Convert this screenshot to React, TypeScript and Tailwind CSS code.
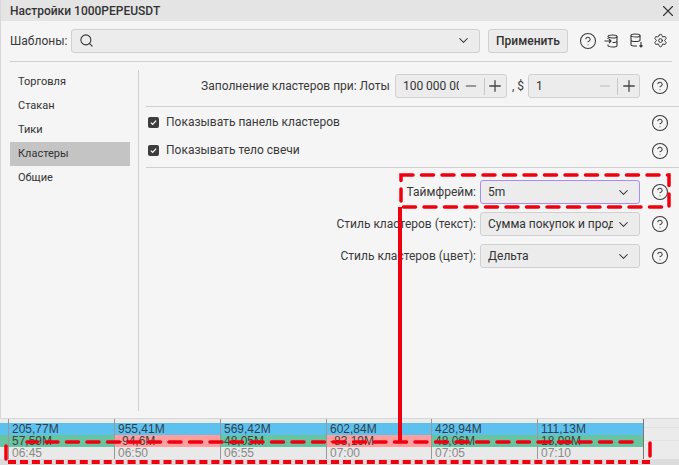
import React from 'react';
import { ChevronDown, CircleHelp, Minus, Plus, Search, Settings, X } from 'lucide-react';

const menuItems = ['Торговля', 'Стакан', 'Тики', 'Кластеры', 'Общие'];

const chartColumns = [
  { volume: '205,77M', delta: '57,59M', time: '06:45', width: 'w-[106px]', bg: 'bg-[#69c5a1]' },
  { volume: '955,41M', delta: '-94,6M', time: '06:50', width: 'w-[106px]', bg: 'bg-[#ff9e9e]' },
  { volume: '569,42M', delta: '48,05M', time: '06:55', width: 'w-[106px]', bg: 'bg-[#69c5a1]' },
  { volume: '602,84M', delta: '-83,19M', time: '07:00', width: 'w-[105px]', bg: 'bg-[#ff9e9e]' },
  { volume: '428,94M', delta: '48,06M', time: '07:05', width: 'w-[106px]', bg: 'bg-[#69c5a1]' },
  { volume: '111,13M', delta: '18,98M', time: '07:10', width: 'w-[106px]', bg: 'bg-[#69c5a1]' },
];

const Help = () => <CircleHelp className="w-[18px] h-[18px] text-[#3a3a3a] shrink-0" strokeWidth={1.4} />;

const DbImport = () => (
  <svg width="14" height="14" viewBox="0 0 14 14" fill="none" stroke="#333" strokeWidth="1.1" className="shrink-0">
    <ellipse cx="8.500" cy="2.500" rx="4.500" ry="1.500" />
    <path d="M13 2.500v9c0 .9-2 1.500-4.500 1.500S4 12.400 4 11.500v-1M13 7c0 .9-2 1.500-4.500 1.500M4 4v1" />
    <path d="M0.500 7h6.500M5 5l2 2-2 2" />
  </svg>
);

const DbExport = () => (
  <svg width="14" height="15" viewBox="0 0 14 15" fill="none" stroke="#333" strokeWidth="1.1" className="shrink-0">
    <ellipse cx="5.500" cy="2.500" rx="4.500" ry="1.500" />
    <path d="M1 2.500v9c0 .9 2 1.500 4.500 1.500H7M10 2.500v5M1 7c0 .9 2 1.500 4.500 1.500S10 7.900 10 7" />
    <path d="M11 9v5M9.500 12.500l1.500 1.500 1.500-1.500" />
  </svg>
);

const Stepper = ({ value, dim }: { value: string; dim?: boolean }) => (
  <div className="w-[112px] h-[24px] flex items-center bg-[#ececec] border border-[#d0d0d0] rounded-[3px] shrink-0">
    <span className="w-[56px] ml-[7px] overflow-hidden whitespace-nowrap text-[12px] text-[#333]">{value}</span>
    <span className="w-[25px] flex justify-center">
      <Minus className={`w-[16px] h-[16px] ${dim ? 'text-[#bbb]' : 'text-[#444]'}`} strokeWidth={1.8} />
    </span>
    <span className="w-px h-[17px] bg-[#c8c8c8]" />
    <span className="w-[21px] flex justify-center">
      <Plus className="w-[18px] h-[18px] text-[#444]" strokeWidth={1.7} />
    </span>
  </div>
);

const Check = ({ label }: { label: string }) => (
  <label className="flex items-center gap-[7px] text-[12px] text-[#3a3a3a]">
    <span className="w-[11px] h-[11px] rounded-[2px] bg-[#3d3d3d] flex items-center justify-center">
      <svg width="7" height="7" viewBox="0 0 8 8" fill="none" stroke="#fff" strokeWidth="1.4"><path d="M1 4.200l2 2 4-4.400" /></svg>
    </span>
    {label}
  </label>
);

const SelectRow = ({ label, value, focused }: { label: string; value: string; focused?: boolean }) => (
  <div className="h-[24px] flex items-center justify-end pr-[10px]">
    <span className="text-[12px] text-[#3a3a3a] mr-[4px]">{label}</span>
    <div className={`w-[160px] h-[24px] flex items-center bg-[#ececec] border rounded-[3px] pl-[7px] pr-[8px] ${focused ? 'border-[#a88cf0]' : 'border-[#d0d0d0]'}`}>
      <span className="w-[125px] overflow-hidden whitespace-nowrap text-[12px] text-[#333]">{value}</span>
      <ChevronDown className="ml-auto w-[15px] h-[15px] text-[#444]" strokeWidth={1.7} />
    </div>
    <span className="ml-[11px]"><Help /></span>
  </div>
);

const App: React.FC = () => {
  return (
    <div className="relative w-[679px] h-[465px] overflow-hidden bg-[#ebebeb] text-[#333] font-['Roboto',sans-serif] flex flex-col">
      {/* dialog */}
      <div className="h-[419px] shrink-0 flex flex-col bg-[#f5f5f5] border-l border-b border-[#d8d8d8]">
        {/* title */}
        <div className="h-[21px] shrink-0 bg-[#e4e4e4] flex items-center pl-[9px] pr-[2px]">
          <span className="text-[12px] font-medium text-[#333]">Настройки 1000PEPEUSDT</span>
          <X className="ml-auto w-[18px] h-[18px] text-[#333]" strokeWidth={1.5} />
        </div>

        {/* templates */}
        <div className="h-[41px] shrink-0 ml-[9px] mr-[7px] border-b border-[#cfcfcf] flex items-center pb-[1px]">
          <span className="text-[12px] text-[#3a3a3a] w-[61px]">Шаблоны:</span>
          <div className="w-[409px] h-[24px] flex items-center bg-[#ececec] border border-[#d0d0d0] rounded-[3px] pl-[7px] pr-[8px]">
            <Search className="w-[15px] h-[15px] text-[#333]" strokeWidth={1.7} />
            <ChevronDown className="ml-auto w-[15px] h-[15px] text-[#444]" strokeWidth={1.7} />
          </div>
          <button className="ml-[8px] w-[80px] h-[24px] bg-[#ececec] border border-[#d0d0d0] rounded-[3px] text-[12px] font-medium text-[#333]">Применить</button>
          <span className="ml-[11px] flex items-center">
            <Help />
            <span className="ml-[7px]"><DbImport /></span>
            <span className="ml-[12px]"><DbExport /></span>
            <Settings className="ml-[9px] w-[15px] h-[15px] text-[#333]" strokeWidth={1.6} />
          </span>
        </div>

        {/* settings */}
        <div className="flex-1 flex min-h-0 pl-[9px] pt-[8px] pb-[7px]">
          <div className="w-[120px] shrink-0">
            {menuItems.map((item) => (
              <div key={item} className={`h-[24px] flex items-center pl-[8px] pt-px text-[11px] ${item === 'Кластеры' ? 'bg-[#c4c4c4]' : ''}`}>{item}</div>
            ))}
          </div>
          <div className="ml-[8px] w-px bg-[#d0d0d0] shrink-0" />
          <div className="flex-1 pl-[7px]">
            <div className="h-[37px] border-b border-[#cfcfcf] flex items-center justify-end pr-[10px] pb-[8px] pt-[4px]">
              <span className="text-[12px] text-[#3a3a3a] mr-[5px]">Заполнение кластеров при: Лоты</span>
              <Stepper value="100 000 000" />
              <span className="text-[12px] ml-[5px] mr-[4px] text-[#3a3a3a]">, $</span>
              <Stepper value="1" dim />
              <span className="ml-[11px]"><Help /></span>
            </div>
            <div className="h-[61px] border-b border-[#cfcfcf] flex flex-col pr-[10px] pl-[2px] pt-px">
              <div className="h-[28px] flex items-center justify-between"><Check label="Показывать панель кластеров" /><span className="mt-px"><Help /></span></div>
              <div className="h-[28px] flex items-center justify-between"><Check label="Показывать тело свечи" /><span className="mt-px"><Help /></span></div>
            </div>
            <div className="pt-[12px] flex flex-col gap-[8px]">
              <SelectRow label="Таймфрейм:" value="5m" focused />
              <SelectRow label="Стиль кластеров (текст):" value="Сумма покупок и продаж" />
              <SelectRow label="Стиль кластеров (цвет):" value="Дельта" />
            </div>
          </div>
        </div>
      </div>

      {/* chart strip */}
      <div className="h-[40px] shrink-0 flex text-[12px] leading-[12px] font-['Liberation_Sans',sans-serif]">
        <div className="w-[8px] flex flex-col">
          <div className="h-[4px]" />
          <div className="h-[12px] bg-[#5cc1ef]" />
          <div className="h-[12px] bg-[#69c5a1]" />
        </div>
        {chartColumns.map((col) => (
          <div key={col.time} className={`${col.width} border-l border-[#999] flex flex-col`}>
            <div className="h-[4px]" />
            <div className="h-[12px] bg-[#5cc1ef] pl-[3px] text-[#2f3f4a]">{col.volume}</div>
            <div className={`h-[12px] ${col.bg} pl-[3px] text-[#3f3f3f]`}>{col.delta}</div>
            <div className="h-[12px] bg-[#e9e9e9] pl-[3px] text-[#8a8a8a]">{col.time}</div>
          </div>
        ))}
        <div className="flex-1 border-l border-[#777] flex flex-col">
          <div className="h-[9px] border-b border-[#e2e2e2]" />
          <div className="h-[13px] border-b border-[#e2e2e2]" />
        </div>
      </div>
      <div className="flex-1 bg-[#dcdcdc]" />

      {/* red annotations */}
      <svg className="absolute left-0 top-0" width="679" height="465" fill="none" stroke="#f0000f" strokeWidth="3.500">
        <rect x="401" y="175" width="268" height="32" strokeDasharray="12 8.500" strokeLinecap="round" />
        <path d="M6 446V459" strokeLinecap="round" />
        <path d="M632 442H27" strokeDasharray="12 8.500" strokeLinecap="round" />
        <path d="M650 443V456" strokeLinecap="round" />
        <path d="M400 207V443" strokeWidth="4" />
      </svg>
      <div className="absolute left-[8px] top-[460px] w-[642px] h-[4px] border-t-[4px] border-dashed border-[#f0000f]" />
    </div>
  );
};

export default App;
